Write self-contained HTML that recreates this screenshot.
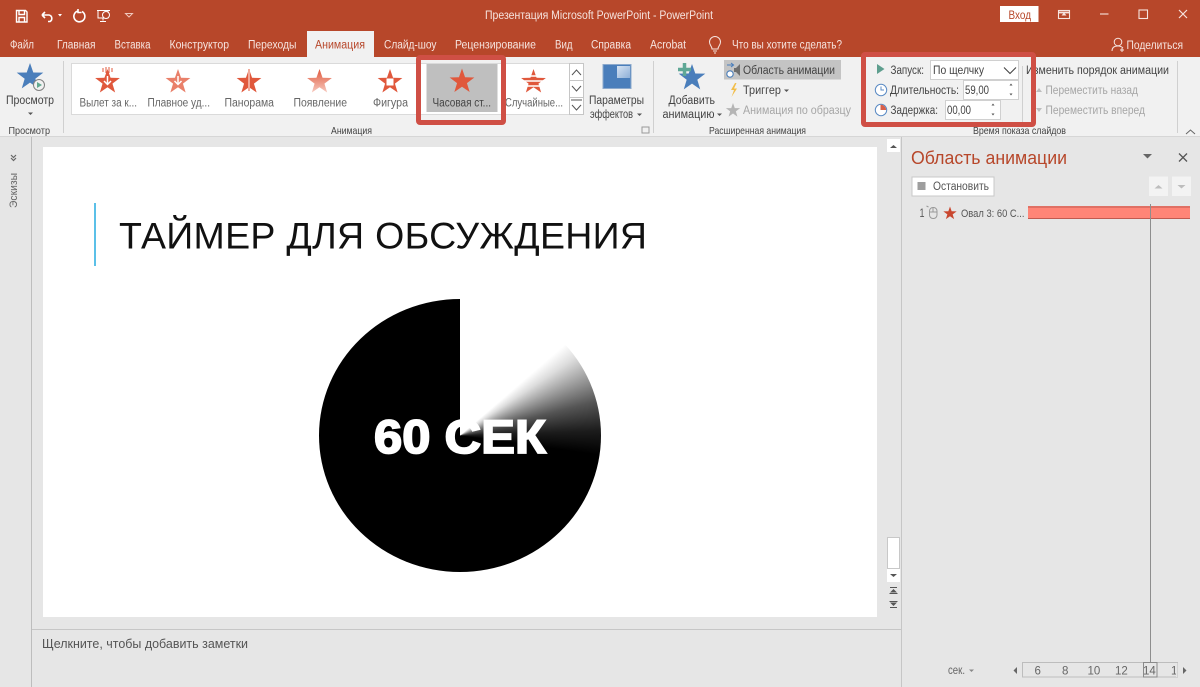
<!DOCTYPE html>
<html lang="ru"><head><meta charset="utf-8"><title>PowerPoint</title>
<style>
html,body{margin:0;padding:0;width:1200px;height:687px;overflow:hidden;background:#E6E6E6}
.a{position:absolute}
svg{position:absolute;left:0;top:0}
text{font-family:"Liberation Sans",sans-serif;font-size:11.5px;fill:#444}
.w text{fill:#F6E4DF}
</style></head><body>
<div class="a" style="left:0;top:0;width:1200px;height:57px;background:#B7472A"></div>
<div class="a" style="left:0;top:57px;width:1200px;height:79px;background:#F1F1F1;border-bottom:1px solid #D6D6D6"></div>
<div class="a" style="left:43px;top:147px;width:834px;height:470px;background:#fff"></div>
<div class="a" style="left:319px;top:299px;width:282px;height:273px;border-radius:50%;background:conic-gradient(from 0deg at 50% 50%,#fff 0deg,#fff 49deg,#ddd 56deg,#999 66deg,#555 76deg,#1c1c1c 88deg,#000 98deg,#000 360deg)"></div>
<svg width="1200" height="687" viewBox="0 0 1200 687" xmlns="http://www.w3.org/2000/svg">
<defs>
<polygon id="s" points="0,-1 .235,-.324 .951,-.309 .38,.124 .588,.809 0,.4 -.588,.809 -.38,.124 -.951,-.309 -.235,-.324"/>
<linearGradient id="fade" x1="0" y1="0" x2="0" y2="1"><stop offset="0" stop-color="#E0583C"/><stop offset="1" stop-color="#F7C9BE"/></linearGradient>
<linearGradient id="pan" x1="0" y1="0" x2="1" y2="1"><stop offset="0" stop-color="#D6E3F2"/><stop offset="1" stop-color="#8FB0D8"/></linearGradient>
</defs>

<!-- quick access -->
<g fill="none" stroke="#fff" stroke-width="1.400">
<path d="M16.500 10.500h9l1.500 1.500v10H16.500z"/><path d="M19 10.500v4h5.500v-4M19 22v-4.500h5.500V22"/>
<path d="M42 15h7a3.500 3.500 0 0 1 1 6.500h-2M42 15l3-3M42 15l3 3" stroke-width="1.600"/>
<path d="M82 11.500a5.500 5.500 0 1 1-4 -.5M78 9v3.500h3.500" stroke-width="1.600"/>
<path d="M97 10.500h13M98 11v7h10v-7M103 18v2.500M100 21.500h6" stroke-width="1"/>
</g>
<path d="M58 14h4l-2 2.500z" fill="#fff"/>
<circle cx="106" cy="15" r="3.500" fill="#B7472A" stroke="#fff"/>
<path d="M125.500 13.500h7l-3.500 3.500z" fill="none" stroke="#F0C8BC" stroke-width="1"/>

<!-- title/windows -->
<g class="w">
<text x="485" y="19" textLength="228" lengthAdjust="spacingAndGlyphs">Презентация Microsoft PowerPoint  -  PowerPoint</text>
<text x="10" y="48.500" textLength="24" lengthAdjust="spacingAndGlyphs">Файл</text>
<text x="57" y="48.500" textLength="38.500" lengthAdjust="spacingAndGlyphs">Главная</text>
<text x="114.500" y="48.500" textLength="36" lengthAdjust="spacingAndGlyphs">Вставка</text>
<text x="169.500" y="48.500" textLength="59.500" lengthAdjust="spacingAndGlyphs">Конструктор</text>
<text x="248" y="48.500" textLength="48.500" lengthAdjust="spacingAndGlyphs">Переходы</text>
<text x="384" y="48.500" textLength="52.500" lengthAdjust="spacingAndGlyphs">Слайд-шоу</text>
<text x="455" y="48.500" textLength="81" lengthAdjust="spacingAndGlyphs">Рецензирование</text>
<text x="555" y="48.500" textLength="17.500" lengthAdjust="spacingAndGlyphs">Вид</text>
<text x="591" y="48.500" textLength="40" lengthAdjust="spacingAndGlyphs">Справка</text>
<text x="650" y="48.500" textLength="36" lengthAdjust="spacingAndGlyphs">Acrobat</text>
<text x="732" y="48.500" textLength="110" lengthAdjust="spacingAndGlyphs">Что вы хотите сделать?</text>
<text x="1126.500" y="49" textLength="56.500" lengthAdjust="spacingAndGlyphs">Поделиться</text>
</g>
<rect x="307" y="31" width="67" height="27" fill="#F1F1F1"/>
<text x="315" y="48.500" textLength="50" lengthAdjust="spacingAndGlyphs" style="fill:#B7472A">Анимация</text>
<path d="M712 49c0-3-2.500-3.500-2.500-7a5.500 5.500 0 0 1 11 0c0 3.500-2.500 4-2.500 7zM713 51h4M714 53h2" fill="none" stroke="#F6E4DF" stroke-width="1"/>
<circle cx="1118" cy="42" r="3.800" fill="none" stroke="#F6E4DF"/>
<path d="M1112 51c0-4 3-5 6-5s4 1 5 2M1120 50h4M1122 48v4" fill="none" stroke="#F6E4DF"/>
<rect x="1000" y="6" width="38.500" height="16" fill="#fff"/>
<text x="1008.500" y="19" textLength="22.500" lengthAdjust="spacingAndGlyphs" style="fill:#B7472A">Вход</text>
<g fill="none" stroke="#F6E4DF" stroke-width="1.100">
<rect x="1058.500" y="10.500" width="11" height="8"/><path d="M1058.500 12.500h11" stroke-width="1.800"/>
<path d="M1100 14h8.500"/><rect x="1139" y="10" width="8.500" height="8.500"/><path d="M1179 10l8 8M1187 10l-8 8" stroke-width="1.200"/>
</g>
<path d="M1064 12.500l2.500 3h-5z" fill="#F6E4DF"/>

<!-- Ribbon -->
<rect x="63" y="61" width="1" height="72" fill="#D0D0D0"/>
<rect x="653" y="61" width="1" height="72" fill="#D0D0D0"/>
<rect x="1022" y="66" width="1" height="58" fill="#D0D0D0"/>
<rect x="1177" y="61" width="1" height="72" fill="#D0D0D0"/>
<use href="#s" transform="translate(30 77) scale(14)" fill="#4A7EBB"/>
<circle cx="39" cy="85" r="5.500" fill="#F1F1F1" stroke="#808080"/>
<path d="M37 82l5 3-5 3z" fill="#62A88F"/>
<text x="6" y="104" font-size="12" textLength="48" lengthAdjust="spacingAndGlyphs">Просмотр</text>
<path d="M28 112.500h5l-2.500 2.500z" fill="#555"/>
<text x="8.500" y="134" style="font-size:10.500px" textLength="41.500" lengthAdjust="spacingAndGlyphs">Просмотр</text>

<rect x="71.500" y="63.500" width="512" height="51" fill="#fff" stroke="#DADADA"/>
<rect x="426.500" y="64" width="71" height="48" fill="#BFBFBF"/>
<g fill="#E0583C">
<use href="#s" transform="translate(107.500 82) scale(13)"/>
<use href="#s" transform="translate(178 82) scale(13)" fill="#E9806A"/>
<use href="#s" transform="translate(249 82) scale(13)"/>
<use href="#s" transform="translate(319.500 82) scale(13)" fill="url(#fade)"/>
<use href="#s" transform="translate(390 82) scale(13)"/>
<use href="#s" transform="translate(462 81.500) scale(13)" fill="#E0583C"/>
<use href="#s" transform="translate(533.500 82) scale(13)"/>
</g>
<path d="M103 68v4M106 67v6M109 67v6M112 68v4" stroke="#E0583C" stroke-width="1"/>
<path d="M107.500 76v8M104 81l3.500 3.500 3.500-3.500" fill="none" stroke="#fff" stroke-width="1.500"/>
<path d="M178 76v8M174.500 81l3.500 3.500 3.500-3.500" fill="none" stroke="#fff" stroke-width="1.500"/>
<path d="M249 69v22" stroke="#F2A999" stroke-width="2"/>
<rect x="386.500" y="78.500" width="7" height="7" fill="#fff"/>
<path d="M520 76h28M520 81h28M520 86h28" stroke="#fff" stroke-width="1.500"/>
<g style="font-size:11px">
<text x="79.500" y="106.500" textLength="57.500" lengthAdjust="spacingAndGlyphs" style="fill:#666">Вылет за к...</text>
<text x="147.500" y="106.500" textLength="62.500" lengthAdjust="spacingAndGlyphs" style="fill:#666">Плавное уд...</text>
<text x="224.500" y="106.500" textLength="49.500" lengthAdjust="spacingAndGlyphs" style="fill:#666">Панорама</text>
<text x="293.500" y="106.500" textLength="53.500" lengthAdjust="spacingAndGlyphs" style="fill:#666">Появление</text>
<text x="373" y="106.500" textLength="35" lengthAdjust="spacingAndGlyphs" style="fill:#666">Фигура</text>
<text x="432.500" y="106.500" textLength="58.500" lengthAdjust="spacingAndGlyphs" style="fill:#444">Часовая ст...</text>
<text x="505" y="106.500" textLength="58" lengthAdjust="spacingAndGlyphs" style="fill:#666">Случайные...</text>
</g>
<g fill="#fff" stroke="#C6C6C6"><rect x="569.500" y="63.500" width="14" height="17"/><rect x="569.500" y="80.500" width="14" height="17"/><rect x="569.500" y="97.500" width="14" height="17"/></g>
<path d="M572 75l4.500-5 4.500 5M572 86l4.500 5 4.500-5M571 100h11M572 105l4.500 5 4.500-5" fill="none" stroke="#555"/>
<rect x="603" y="64.500" width="28" height="24" fill="#4A7EBB" stroke="#8CA9CC"/>
<rect x="617" y="66" width="13" height="12" fill="url(#pan)"/>
<text x="589" y="104" textLength="55" lengthAdjust="spacingAndGlyphs">Параметры</text>
<text x="590" y="118" textLength="43" lengthAdjust="spacingAndGlyphs">эффектов</text>
<path d="M637 113.500h5l-2.500 2.500z" fill="#555"/>
<text x="331" y="134" style="font-size:10.500px" textLength="41" lengthAdjust="spacingAndGlyphs">Анимация</text>
<rect x="642" y="127" width="7" height="6" fill="none" stroke="#999"/>

<use href="#s" transform="translate(692 78) scale(14)" fill="#4A7EBB"/>
<path d="M684.500 63v13M678 69.500h13" stroke="#5FA896" stroke-width="3.500"/>
<text x="668.500" y="104" textLength="46.500" lengthAdjust="spacingAndGlyphs">Добавить</text>
<text x="662.500" y="118" textLength="52" lengthAdjust="spacingAndGlyphs">анимацию</text>
<path d="M717 113.500h5l-2.500 2.500z" fill="#555"/>
<rect x="724" y="60" width="117" height="19.500" fill="#C4C4C4"/>
<circle cx="730" cy="74" r="3.200" fill="#fff" stroke="#4A7EBB" stroke-width="1.100"/>
<path d="M727 65h6M731 63l2.500 2-2.500 2" fill="none" stroke="#4A7EBB" stroke-width="1.100"/>
<path d="M734 68h2l4-4v12l-4-4h-2z" fill="#6E6E6E"/>
<text x="743" y="74" textLength="92" lengthAdjust="spacingAndGlyphs">Область анимации</text>
<path d="M735 83l-4 7h3l-2.500 7 5.500-8.500h-3l2.500-5.500z" fill="#F2BE4A"/>
<text x="743" y="94" textLength="38" lengthAdjust="spacingAndGlyphs">Триггер</text>
<path d="M784 89.500h5l-2.500 2.500z" fill="#555"/>
<use href="#s" transform="translate(733 110.500) scale(7.500)" fill="#B5B5B5"/>
<text x="743" y="114" textLength="108" lengthAdjust="spacingAndGlyphs" style="fill:#A6A6A6">Анимация по образцу</text>
<text x="709" y="134" style="font-size:10.500px" textLength="97" lengthAdjust="spacingAndGlyphs">Расширенная анимация</text>

<path d="M877 64l7.500 5-7.500 5z" fill="#5E9E8E"/>
<text x="890.500" y="74" textLength="33.500" lengthAdjust="spacingAndGlyphs">Запуск:</text>
<rect x="930.500" y="60.500" width="88" height="19" fill="#fff" stroke="#D0D0D0"/>
<text x="933" y="74" textLength="51" lengthAdjust="spacingAndGlyphs">По щелчку</text>
<path d="M1004 67.500l6 6 6-6" fill="none" stroke="#444" stroke-width="1.100"/>
<circle cx="881" cy="90" r="5.700" fill="#fff" stroke="#5B8BC4"/>
<path d="M881 86.500V90h3" fill="none" stroke="#5B8BC4"/>
<text x="890" y="94" textLength="69" lengthAdjust="spacingAndGlyphs">Длительность:</text>
<rect x="963.500" y="80.500" width="55" height="19" fill="#fff" stroke="#D0D0D0"/>
<text x="965" y="94" textLength="24" lengthAdjust="spacingAndGlyphs">59,00</text>
<path d="M1009.500 85.500l1.500-2 1.500 2zM1009.500 93.500l1.500 2 1.500-2z" fill="#555"/>
<circle cx="881" cy="110" r="5.700" fill="#fff" stroke="#5B8BC4"/>
<path d="M881 110h5.200a5.200 5.200 0 0 0-5.200-5.200z" fill="#D9604A"/>
<path d="M881 104.800V110" stroke="#D9604A"/>
<text x="890.500" y="114" textLength="47.500" lengthAdjust="spacingAndGlyphs">Задержка:</text>
<rect x="945.500" y="100.500" width="55" height="19" fill="#fff" stroke="#D0D0D0"/>
<text x="947" y="114" textLength="24" lengthAdjust="spacingAndGlyphs">00,00</text>
<path d="M991.500 105.500l1.500-2 1.500 2zM991.500 113.500l1.500 2 1.500-2z" fill="#555"/>
<text x="1026" y="74" textLength="143" lengthAdjust="spacingAndGlyphs">Изменить порядок анимации</text>
<path d="M1036 92l3-4 3 4zM1036 108l3 4 3-4z" fill="#BDBDBD"/>
<text x="1045.500" y="94" textLength="92.500" lengthAdjust="spacingAndGlyphs" style="fill:#A6A6A6">Переместить назад</text>
<text x="1045.500" y="114" textLength="99.500" lengthAdjust="spacingAndGlyphs" style="fill:#A6A6A6">Переместить вперед</text>
<text x="973" y="134" style="font-size:10.500px" textLength="93" lengthAdjust="spacingAndGlyphs">Время показа слайдов</text>
<path d="M1186 134l4.500-4 4.500 4" fill="none" stroke="#666"/>

<!-- red highlights -->
<rect x="418.500" y="57.500" width="85" height="65" rx="1.500" fill="none" stroke="#CF4F45" stroke-width="5"/>
<rect x="863.500" y="54.500" width="170" height="70" rx="1.500" fill="none" stroke="#CF4F45" stroke-width="5"/>

<!-- left pane -->
<rect x="31" y="137" width="1" height="550" fill="#BDBDBD"/>
<path d="M11 155l2.500 2.500 2.500-2.500M11 158l2.500 2.500 2.500-2.500" fill="none" stroke="#666" stroke-width="1.200"/>
<text transform="translate(17 208) rotate(-90)" textLength="35" lengthAdjust="spacingAndGlyphs" style="font-size:11px;fill:#666">Эскизы</text>

<!-- slide -->
<rect x="94" y="203" width="2" height="63" fill="#5BC0E8"/>
<text x="119" y="248.500" textLength="528" lengthAdjust="spacing" style="font-size:37.500px;fill:#111">ТАЙМЕР ДЛЯ ОБСУЖДЕНИЯ</text>
<text x="374" y="453" textLength="172" lengthAdjust="spacingAndGlyphs" style="font-size:47px;font-weight:bold;fill:#fff;stroke:#fff;stroke-width:1.800px">60 СЕК</text>

<!-- scrollbar -->
<rect x="887" y="139" width="13" height="13" fill="#fff"/>
<path d="M890 148l3.500-3 3.500 3z" fill="#555"/>
<rect x="887.500" y="537.500" width="12" height="31" fill="#fff" stroke="#C8C8C8"/>
<rect x="887" y="569" width="13" height="13" fill="#fff"/>
<path d="M890 574l3.500 3 3.500-3z" fill="#555"/>
<path d="M890 587h7v1h-7zM890 592.500l3.500-3.500 3.500 3.500zM889.500 593h8v1h-8z" fill="#555"/>
<path d="M889.500 601h8v1h-8zM890 602.500l3.500 3.500 3.500-3.500zM890 607h7v1h-7z" fill="#555"/>

<!-- notes -->
<rect x="32" y="629" width="869" height="1" fill="#C6C6C6"/>
<text x="42" y="648" textLength="206" lengthAdjust="spacingAndGlyphs" style="font-size:13px;fill:#555">Щелкните, чтобы добавить заметки</text>
<rect x="901" y="137" width="1" height="550" fill="#C6C6C6"/>

<!-- animation pane -->
<text x="911" y="164" textLength="156" lengthAdjust="spacingAndGlyphs" style="font-size:18px;fill:#B7472A">Область анимации</text>
<path d="M1143 154h9l-4.500 4.500z" fill="#666"/>
<path d="M1179 153.500l8 8M1187 153.500l-8 8" stroke="#555" stroke-width="1.300"/>
<rect x="912" y="177" width="82" height="19" fill="#fff" stroke="#C8C8C8"/>
<rect x="917.500" y="182" width="8" height="8" fill="#9E9E9E"/>
<text x="933" y="190" textLength="56" lengthAdjust="spacingAndGlyphs" style="fill:#555">Остановить</text>
<rect x="1149" y="176.500" width="19" height="19.500" fill="#F3F3F3"/>
<rect x="1172" y="176.500" width="19" height="19.500" fill="#F3F3F3"/>
<path d="M1154.500 188.500l4-3.500 4 3.500z" fill="#BDBDBD"/>
<path d="M1177.500 185l4 3.500 4-3.500z" fill="#BDBDBD"/>
<text x="919.500" y="217" textLength="5" lengthAdjust="spacingAndGlyphs" style="fill:#555">1</text>
<rect x="929.500" y="207.500" width="7.500" height="11" rx="3.500" fill="none" stroke="#999"/>
<path d="M929.500 212h7.500M933 207.500v4.500M926.500 206l2 1" stroke="#999" fill="none"/>
<use href="#s" transform="translate(950 213.500) scale(7)" fill="#C9472F"/>
<text x="961" y="217" textLength="63.500" lengthAdjust="spacingAndGlyphs" style="font-size:11px;fill:#555">Овал 3: 60 С...</text>
<rect x="1028" y="206" width="162" height="13" fill="#FF8577"/>
<rect x="1028" y="206.500" width="162" height="1" fill="#C05A50"/>
<rect x="1028" y="218" width="162" height="1" fill="#C05A50"/>
<rect x="1150" y="204" width="1" height="458" fill="#8E8E8E"/>

<!-- timeline -->
<text x="948" y="674" textLength="17" lengthAdjust="spacingAndGlyphs" style="fill:#666">сек.</text>
<path d="M969 669.500h5l-2.500 2.500z" fill="#888"/>
<path d="M1017 667v7l-3.500-3.500z" fill="#666"/>
<path d="M1183 667v7l3.500-3.500z" fill="#666"/>
<rect x="1022.500" y="662.500" width="155" height="14.500" fill="#E6E6E6" stroke="#BDBDBD"/>
<g style="font-size:11.500px">
<text x="1034.500" y="674.500" style="fill:#666">6</text>
<text x="1062" y="674.500" style="fill:#666">8</text>
<text x="1087.500" y="674.500" style="fill:#666">10</text>
<text x="1115" y="674.500" style="fill:#666">12</text>
<text x="1143" y="674.500" style="fill:#666">14</text>
<text x="1171" y="674.500" style="fill:#666">1</text>
</g>
<rect x="1143.500" y="662.500" width="13.500" height="14.500" fill="none" stroke="#8A8A8A"/>
<rect x="1176" y="663" width="1.500" height="14" fill="#E6E6E6"/>
</svg>
</body></html>
